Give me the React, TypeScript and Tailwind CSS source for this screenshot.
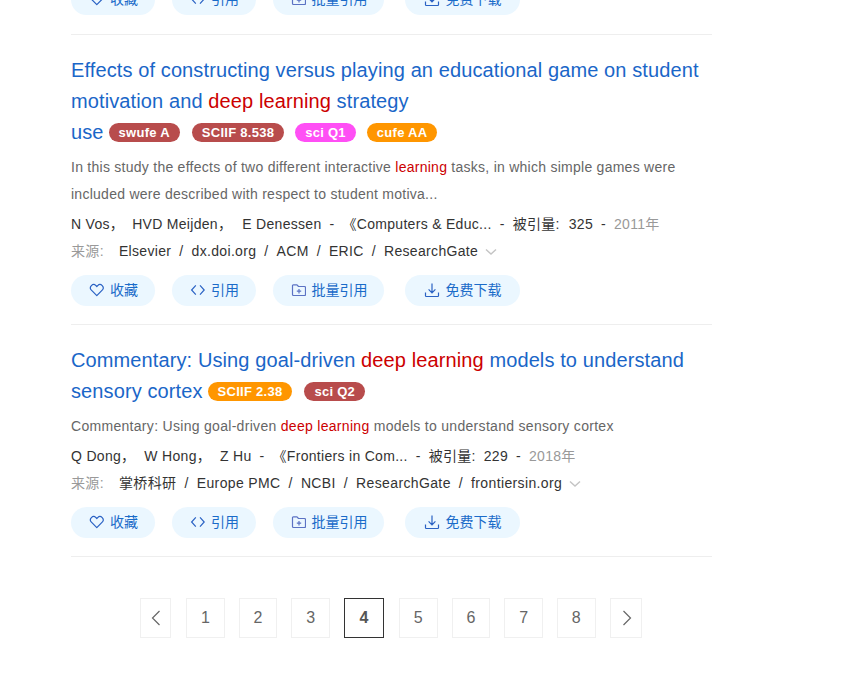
import React from "react";

const FONT = "font-['Liberation_Sans','Noto_Sans_CJK_SC',sans-serif]";

function R({ children }: { children: React.ReactNode }) {
  return <span className="text-[#cc0000]">{children}</span>;
}

function Badge({ color, children, ml = "ml-[5px]" }: { color: string; children: React.ReactNode; ml?: string }) {
  return (
    <span
      className={`${color} ${ml} inline-flex h-[19px] items-center rounded-[9.5px] px-[10px] align-[2px] text-[13px] leading-none font-bold tracking-[0.27px] text-white`}
    >
      {children}
    </span>
  );
}

function Heart() {
  return (
    <svg width="16" height="16" viewBox="-0.8 0 16 16" fill="none" stroke="#2a62c4" strokeWidth="1.2">
      <path d="M8 13.6 2.6 8.2a3.3 3.3 0 0 1 0-4.6 3.2 3.2 0 0 1 4.5 0l.9.9.9-.9a3.2 3.2 0 0 1 4.5 0 3.3 3.3 0 0 1 0 4.6z" strokeLinejoin="round" />
    </svg>
  );
}
function Code() {
  return (
    <svg width="16" height="16" viewBox="0 0 16 16" fill="none" stroke="#2a62c4" strokeWidth="1.2">
      <path d="M6.8 3.4 2.6 8l4.2 4.6M11 3.4 15.2 8 11 12.6" />
    </svg>
  );
}
function Folder() {
  return (
    <svg width="16" height="16" viewBox="-1 0 16 16" fill="none" stroke="#5b72c4" strokeWidth="1.2">
      <path d="M1.5 4V12.5a1 1 0 0 0 1 1h11a1 1 0 0 0 1-1V5.5a1 1 0 0 0-1-1H7.5L6 2.8H2.5a1 1 0 0 0-1 1.2z" strokeLinejoin="round" />
      <path d="M8 7v4.4M5.8 9.2h4.4" />
    </svg>
  );
}
function Download() {
  return (
    <svg width="16" height="16" viewBox="0 0 16 16" fill="none" stroke="#2a62c4" strokeWidth="1.2">
      <path d="M8 1.5v9M4.6 7.4 8 10.8l3.4-3.4M1.5 10.5v3.2a.8.8 0 0 0 .8.8h11.4a.8.8 0 0 0 .8-.8v-3.2" />
    </svg>
  );
}

function Action({ w, icon, label }: { w: string; icon: React.ReactNode; label: string }) {
  return (
    <div className={`${w} flex h-[31px] items-center justify-center gap-[6px] rounded-[16px] bg-[#ebf7ff] pb-px text-[14px] leading-[20px] text-[#1a6bc9]`}>
      {icon}
      <span>{label}</span>
    </div>
  );
}

function Actions() {
  return (
    <div className="flex h-[31px]">
      <Action w="w-[84px]" icon={<Heart />} label="收藏" />
      <div className="w-[17px]" />
      <Action w="w-[84px]" icon={<Code />} label="引用" />
      <div className="w-[17px]" />
      <Action w="w-[111px]" icon={<Folder />} label="批量引用" />
      <div className="w-[21px]" />
      <Action w="w-[115px]" icon={<Download />} label="免费下载" />
    </div>
  );
}

function Chevron() {
  return (
    <svg className="ml-[7px] inline-block" width="12" height="8" viewBox="0 0 12 8" fill="none" stroke="#c4c4c4" strokeWidth="1.4">
      <path d="M1 1.5 6 6l5-4.5" />
    </svg>
  );
}

function Sep({ c = "/" }: { c?: string }) {
  return <span className="mx-[8px]">{c}</span>;
}

function PageItem({ children, active, w, mr }: { children: React.ReactNode; active?: boolean; w?: string; mr?: string }) {
  return (
    <div
      className={`${w ?? "w-[38.67px]"} ${mr ?? ""} flex h-[40px] items-center justify-center border text-[16px] ${
        active ? "border-[#333333] font-bold text-[#555555]" : "border-[#f0f0f0] text-[#666666]"
      }`}
    >
      {children}
    </div>
  );
}

export default function App() {
  return (
    <div className={`${FONT} h-[674px] w-[863px] overflow-hidden bg-white`}>
      <div className="-mt-[16px] ml-[71px] w-[641px]">
        <Actions />
        <div className="mt-[19px] border-t border-[#eeeeee]" />

        <div className="pt-[20px]">
          <div className="text-[20px] leading-[31px] tracking-[0.11px] text-[#1a66c8]">
            Effects of constructing versus playing an educational game on student motivation and <R>deep learning</R> strategy
            <br />
            use
            <Badge color="bg-[#b84c4c]">swufe A</Badge>
            <Badge color="bg-[#b84c4c]" ml="ml-[12px]">SCIIF 8.538</Badge>
            <Badge color="bg-[#ff4ff5]" ml="ml-[11px]">sci Q1</Badge>
            <Badge color="bg-[#ff9600]" ml="ml-[11px]">cufe AA</Badge>
          </div>
          <div className="mt-[6px] text-[14px] leading-[27px] tracking-[0.26px] text-[#666666]">
            In this study the effects of two different interactive <R>learning</R> tasks, in which simple games were
            <br />
            included were described with respect to student motiva...
          </div>
          <div className="mt-[3px] text-[14px] leading-[27px] tracking-[0.3px] text-[#333333]">
            N Vos，<span className="ml-[8px]">HVD Meijden，</span><span className="ml-[10px]">E Denessen</span><Sep c="-" />《Computers &amp; Educ...<Sep c="-" />被引量:<span className="ml-[9px]">325</span><Sep c="-" />
            <span className="text-[#999999]">2011年</span>
          </div>
          <div className="flex items-center text-[14px] leading-[27px] tracking-[0.33px] whitespace-pre text-[#333333]">
            <span className="mr-[15px] text-[#999999]">来源:</span>
            <span>Elsevier</span><Sep /><span>dx.doi.org</span><Sep /><span>ACM</span><Sep /><span>ERIC</span><Sep /><span>ResearchGate</span>
            <Chevron />
          </div>
          <div className="mt-[10px]">
            <Actions />
          </div>
          <div className="mt-[18px] border-t border-[#eeeeee]" />
        </div>

        <div className="pt-[20px]">
          <div className="text-[20px] leading-[31px] tracking-[0.11px] text-[#1a66c8]">
            Commentary: Using goal-driven <R>deep learning</R> models to understand sensory cortex
            <Badge color="bg-[#ff9600]">SCIIF 2.38</Badge>
            <Badge color="bg-[#b84c4c]" ml="ml-[12px]">sci Q2</Badge>
          </div>
          <div className="mt-[6px] text-[14px] leading-[27px] tracking-[0.3px] text-[#666666]">
            Commentary: Using goal-driven <R>deep learning</R> models to understand sensory cortex
          </div>
          <div className="mt-[3px] text-[14px] leading-[27px] tracking-[0.3px] text-[#333333]">
            Q Dong，<span className="ml-[9px]">W Hong，</span><span className="ml-[9px]">Z Hu</span><Sep c="-" />《Frontiers in Com...<Sep c="-" />被引量:<span className="ml-[8px]">229</span><Sep c="-" />
            <span className="text-[#999999]">2018年</span>
          </div>
          <div className="flex items-center text-[14px] leading-[27px] tracking-[0.37px] whitespace-pre text-[#333333]">
            <span className="mr-[15px] text-[#999999]">来源:</span>
            <span>掌桥科研</span><Sep /><span>Europe PMC</span><Sep /><span>NCBI</span><Sep /><span>ResearchGate</span><Sep /><span>frontiersin.org</span>
            <Chevron />
          </div>
          <div className="mt-[10px]">
            <Actions />
          </div>
          <div className="mt-[18px] border-t border-[#eeeeee]" />
        </div>

        <div className="mt-[41px] ml-[69px] flex items-center gap-[14px]">
          <PageItem w="w-[31px]" mr="mr-px">
            <svg width="12" height="16" viewBox="0 0 12 16" fill="none" stroke="#666666" strokeWidth="1.2">
              <path d="M9.5 1 2.5 8l7 7" />
            </svg>
          </PageItem>
          <PageItem>1</PageItem>
          <PageItem>2</PageItem>
          <PageItem>3</PageItem>
          <PageItem active w="w-[40px]" mr="mr-px">4</PageItem>
          <PageItem>5</PageItem>
          <PageItem>6</PageItem>
          <PageItem>7</PageItem>
          <PageItem>8</PageItem>
          <PageItem w="w-[32px]">
            <svg width="12" height="16" viewBox="0 0 12 16" fill="none" stroke="#666666" strokeWidth="1.2">
              <path d="M3.5 1 10.5 8l-7 7" />
            </svg>
          </PageItem>
        </div>
      </div>
    </div>
  );
}
